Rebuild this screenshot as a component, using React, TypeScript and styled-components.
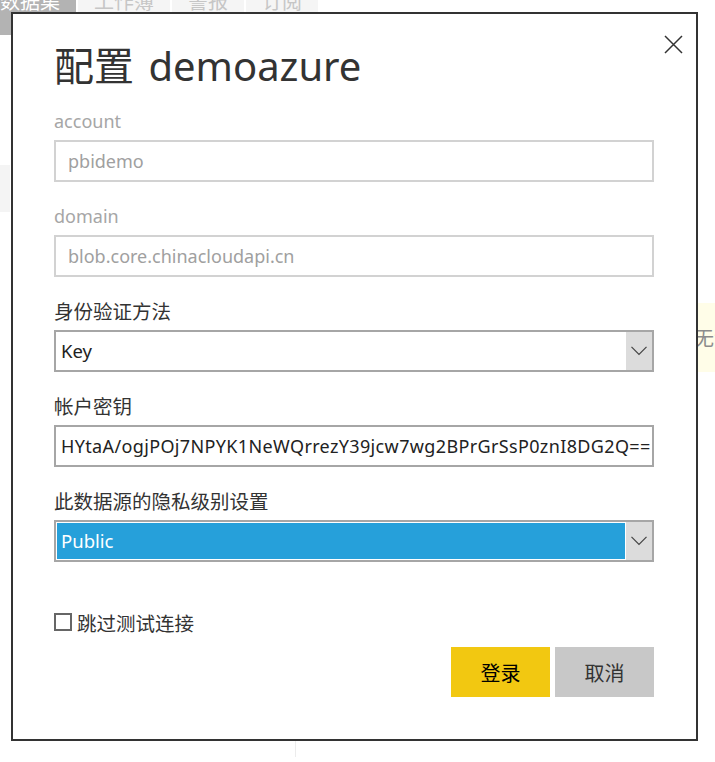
import React from 'react';
import styled, { createGlobalStyle } from 'styled-components';

const GlobalStyle = createGlobalStyle`
  html, body {
    margin: 0;
    padding: 0;
    background: #fff;
  }
  body {
    font-family: "Noto Sans", "Noto Sans CJK SC", sans-serif;
    color: #333;
  }
`;

const Page = styled.div`
  position: relative;
  width: 715px;
  height: 762px;
  overflow: hidden;
  display: flex;
  flex-direction: column;
`;

const TabBar = styled.div`
  display: flex;
  gap: 2px;
  height: 35px;
  flex-shrink: 0;
`;

const Tab = styled.div<{ $active?: boolean; $first?: boolean }>`
  padding: 0 16px;
  margin-left: ${(p) => (p.$first ? '-16px' : '0')};
  background: ${(p) => (p.$active ? '#b3b3b3' : '#f5f5f5')};
  color: ${(p) => (p.$active ? '#fff' : '#c6c6c6')};
  font-size: 20px;
  line-height: 20px;
  overflow: hidden;
`;

const TabText = styled.span`
  display: block;
  margin-top: -8px;
`;

const Body = styled.div`
  flex: 1;
  display: flex;
`;

const LeftRail = styled.div`
  width: 10px;
  flex-shrink: 0;
`;

const RailItem = styled.div`
  margin-top: 130px;
  height: 47px;
  background: #f4f4f4;
`;

const Pane = styled.div`
  width: 285px;
  flex-shrink: 0;
`;

const Divider = styled.div`
  width: 1px;
  margin-bottom: 5px;
  background: #ececec;
`;

const Spacer = styled.div`
  flex: 1;
`;

const Notice = styled.div`
  margin-top: 268px;
  width: 60px;
  height: 69px;
  margin-right: -39px;
  background: #fffde8;
  color: #8c8c8c;
  font-size: 20px;
  display: flex;
  align-items: center;
  padding-left: 1px;
`;

const Dialog = styled.div`
  position: absolute;
  left: 11px;
  top: 12px;
  width: 687px;
  height: 729px;
  box-sizing: border-box;
  border: 2px solid #333;
  background: #fff;
  padding: 28px 42px 0 41px;
  display: flex;
  flex-direction: column;
`;

const CloseButton = styled.button`
  position: absolute;
  top: 21px;
  right: 13px;
  width: 19px;
  height: 19px;
  padding: 0;
  border: 0;
  background: none;
  display: flex;
`;

const Title = styled.h1`
  margin: 0 0 19px;
  font-size: 40px;
  font-weight: 400;
  line-height: 48px;
  color: #333;
`;

const TitleCjk = styled.span`
  margin-right: 4px;
`;

const Field = styled.div`
  margin-bottom: 22px;
`;

const Label = styled.div<{ $muted?: boolean }>`
  height: 25px;
  line-height: 25px;
  margin-bottom: 6px;
  font-size: ${(p) => (p.$muted ? '18px' : '19.5px')};
  color: ${(p) => (p.$muted ? '#a6a6a6' : '#333')};
`;

const TextBox = styled.div<{ $disabled?: boolean }>`
  height: 42px;
  box-sizing: border-box;
  border: 2px solid ${(p) => (p.$disabled ? '#d2d2d2' : '#a6a6a6')};
  padding: 0 ${(p) => (p.$disabled ? '12px' : '5px')};
  font-size: 18px;
  letter-spacing: ${(p) => (p.$disabled ? '0' : '0.36px')};
  line-height: 38px;
  color: ${(p) => (p.$disabled ? '#a0a0a0' : '#222')};
  white-space: nowrap;
  overflow: hidden;
`;

const Select = styled.div`
  height: 42px;
  box-sizing: border-box;
  border: 2px solid #a6a6a6;
  display: flex;
`;

const SelectValue = styled.div<{ $highlighted?: boolean }>`
  flex: 1;
  box-sizing: border-box;
  padding-left: ${(p) => (p.$highlighted ? '4px' : '5px')};
  border: ${(p) => (p.$highlighted ? '1px solid #fff' : '0')};
  background: ${(p) => (p.$highlighted ? '#26a0da' : '#fff')};
  color: ${(p) => (p.$highlighted ? '#fff' : '#222')};
  font-size: 18.5px;
  line-height: ${(p) => (p.$highlighted ? '36px' : '38px')};
`;

const SelectArrow = styled.div`
  width: 26px;
  background: #dcdcdc;
  display: flex;
  align-items: center;
  justify-content: center;
`;

const CheckRow = styled.label`
  margin-top: 29px;
  display: flex;
  align-items: center;
  gap: 5px;
  height: 18px;
  font-size: 19.5px;
  color: #333;
`;

const CheckBox = styled.span`
  width: 18px;
  height: 18px;
  box-sizing: border-box;
  border: 2px solid #666;
`;

const Footer = styled.div`
  margin-top: 16px;
  display: flex;
  justify-content: flex-end;
  gap: 5px;
`;

const Button = styled.button<{ $primary?: boolean }>`
  width: 99px;
  height: 50px;
  border: 0;
  padding: 0;
  font-family: inherit;
  font-size: 20px;
  background: ${(p) => (p.$primary ? '#f2c811' : '#c8c8c8')};
  color: ${(p) => (p.$primary ? '#000' : '#333')};
`;

const Chevron = () => (
  <svg width="16" height="10" viewBox="0 0 16 10">
    <polyline points="0.5,0.8 8,8.5 15.5,0.8" fill="none" stroke="#444" strokeWidth="1.2" />
  </svg>
);

const CloseIcon = () => (
  <svg width="19" height="19" viewBox="0 0 19 19">
    <path d="M1 1 L18 18 M18 1 L1 18" stroke="#333" strokeWidth="1.5" />
  </svg>
);

const tabs = ['数据集', '工作簿', '警报', '订阅'];

export default function App() {
  return (
    <>
      <GlobalStyle />
      <Page>
        <TabBar>
          {tabs.map((t, i) => (
            <Tab key={t} $active={i === 0} $first={i === 0}>
              <TabText>{t}</TabText>
            </Tab>
          ))}
        </TabBar>
        <Body>
          <LeftRail>
            <RailItem />
          </LeftRail>
          <Pane />
          <Divider />
          <Spacer />
          <Notice>无法</Notice>
        </Body>

        <Dialog>
          <CloseButton aria-label="关闭">
            <CloseIcon />
          </CloseButton>
          <Title>
            <TitleCjk>配置</TitleCjk> demoazure
          </Title>

          <Field>
            <Label $muted>account</Label>
            <TextBox $disabled>pbidemo</TextBox>
          </Field>
          <Field>
            <Label $muted>domain</Label>
            <TextBox $disabled>blob.core.chinacloudapi.cn</TextBox>
          </Field>
          <Field>
            <Label>身份验证方法</Label>
            <Select>
              <SelectValue>Key</SelectValue>
              <SelectArrow>
                <Chevron />
              </SelectArrow>
            </Select>
          </Field>
          <Field>
            <Label>帐户密钥</Label>
            <TextBox>HYtaA/ogjPOj7NPYK1NeWQrrezY39jcw7wg2BPrGrSsP0znI8DG2Q==</TextBox>
          </Field>
          <Field>
            <Label>此数据源的隐私级别设置</Label>
            <Select>
              <SelectValue $highlighted>Public</SelectValue>
              <SelectArrow>
                <Chevron />
              </SelectArrow>
            </Select>
          </Field>

          <CheckRow>
            <CheckBox />
            跳过测试连接
          </CheckRow>

          <Footer>
            <Button $primary>登录</Button>
            <Button>取消</Button>
          </Footer>
        </Dialog>
      </Page>
    </>
  );
}
